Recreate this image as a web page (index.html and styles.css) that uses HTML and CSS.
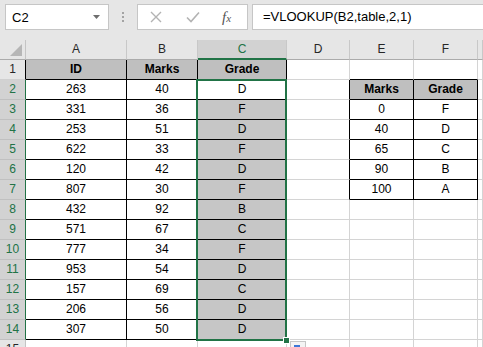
FILE: index.html
```html
<!DOCTYPE html>
<html lang="en">
<head>
    <meta charset="UTF-8">
    <title>VLOOKUP Grades</title>
    <link rel="stylesheet" href="styles.css">
</head>
<body>
    <div class="toolbar">
        <div class="namebox">
            <span>C2</span>
            <svg class="caret" width="7" height="4" viewBox="0 0 7 4"><path d="M0 0h7L3.5 4z" fill="#6e6e6e"/></svg>
        </div>
        <div class="grip"><i></i><i></i><i></i></div>
        <div class="fxbox">
            <svg width="12" height="12" viewBox="0 0 12 12"><path d="M1 1L11 11M11 1L1 11" stroke="#b3b3b3" stroke-width="1.4"/></svg>
            <svg width="14" height="12" viewBox="0 0 14 12"><path d="M1 6.5L5 10.5L13 1.5" stroke="#b3b3b3" stroke-width="1.6" fill="none"/></svg>
            <span class="fx">f<small>x</small></span>
        </div>
        <div class="formula">=VLOOKUP(B2,table,2,1)</div>
    </div>

    <div class="sheet">
        <!-- column headers -->
        <div class="c corner"><svg width="12" height="12" viewBox="0 0 12 12"><path d="M12 0V12H0z" fill="#b6b6b6"/></svg></div>
        <div class="c ch">A</div>
        <div class="c ch">B</div>
        <div class="c ch on">C</div>
        <div class="c ch">D</div>
        <div class="c ch">E</div>
        <div class="c ch">F</div>
        <div class="c ch"></div>

        <div class="c rh edge-r">1</div>
        <div class="c t hd">ID</div>
        <div class="c t hd">Marks</div>
        <div class="c t hd">Grade</div>
        <div class="c"></div>
        <div class="c edge-b"></div>
        <div class="c edge-b"></div>
        <div class="c"></div>

        <div class="c rh on">2</div>
        <div class="c t">263</div>
        <div class="c t">40</div>
        <div class="c t">D</div>
        <div class="c edge-r"></div>
        <div class="c t hd">Marks</div>
        <div class="c t hd">Grade</div>
        <div class="c"></div>

        <div class="c rh on">3</div>
        <div class="c t">331</div>
        <div class="c t">36</div>
        <div class="c t sel">F</div>
        <div class="c edge-r"></div>
        <div class="c t">0</div>
        <div class="c t">F</div>
        <div class="c"></div>

        <div class="c rh on">4</div>
        <div class="c t">253</div>
        <div class="c t">51</div>
        <div class="c t sel">D</div>
        <div class="c edge-r"></div>
        <div class="c t">40</div>
        <div class="c t">D</div>
        <div class="c"></div>

        <div class="c rh on">5</div>
        <div class="c t">622</div>
        <div class="c t">33</div>
        <div class="c t sel">F</div>
        <div class="c edge-r"></div>
        <div class="c t">65</div>
        <div class="c t">C</div>
        <div class="c"></div>

        <div class="c rh on">6</div>
        <div class="c t">120</div>
        <div class="c t">42</div>
        <div class="c t sel">D</div>
        <div class="c edge-r"></div>
        <div class="c t">90</div>
        <div class="c t">B</div>
        <div class="c"></div>

        <div class="c rh on">7</div>
        <div class="c t">807</div>
        <div class="c t">30</div>
        <div class="c t sel">F</div>
        <div class="c edge-r"></div>
        <div class="c t">100</div>
        <div class="c t">A</div>
        <div class="c"></div>

        <div class="c rh on">8</div>
        <div class="c t">432</div>
        <div class="c t">92</div>
        <div class="c t sel">B</div>
        <div class="c"></div>
        <div class="c"></div>
        <div class="c"></div>
        <div class="c"></div>

        <div class="c rh on">9</div>
        <div class="c t">571</div>
        <div class="c t">67</div>
        <div class="c t sel">C</div>
        <div class="c"></div>
        <div class="c"></div>
        <div class="c"></div>
        <div class="c"></div>

        <div class="c rh on">10</div>
        <div class="c t">777</div>
        <div class="c t">34</div>
        <div class="c t sel">F</div>
        <div class="c"></div>
        <div class="c"></div>
        <div class="c"></div>
        <div class="c"></div>

        <div class="c rh on">11</div>
        <div class="c t">953</div>
        <div class="c t">54</div>
        <div class="c t sel">D</div>
        <div class="c"></div>
        <div class="c"></div>
        <div class="c"></div>
        <div class="c"></div>

        <div class="c rh on">12</div>
        <div class="c t">157</div>
        <div class="c t">69</div>
        <div class="c t sel">C</div>
        <div class="c"></div>
        <div class="c"></div>
        <div class="c"></div>
        <div class="c"></div>

        <div class="c rh on">13</div>
        <div class="c t">206</div>
        <div class="c t">56</div>
        <div class="c t sel">D</div>
        <div class="c"></div>
        <div class="c"></div>
        <div class="c"></div>
        <div class="c"></div>

        <div class="c rh on">14</div>
        <div class="c t">307</div>
        <div class="c t">50</div>
        <div class="c t sel">D</div>
        <div class="c"></div>
        <div class="c"></div>
        <div class="c"></div>
        <div class="c"></div>

        <div class="c rh">15</div>
        <div class="c"></div>
        <div class="c"></div>
        <div class="c"></div>
        <div class="c"></div>
        <div class="c"></div>
        <div class="c"></div>
        <div class="c"></div>
    </div>

    <!-- selection C2:C14 -->
    <div class="selection"><span class="handle"></span></div>
    <div class="quick"><span></span></div>
</body>
</html>
```

FILE: styles.css
```css
body {
    margin: 0;
    background: #ffffff;
    font-family: "Liberation Sans", Arial, sans-serif;
    font-size: 12px;
    color: #000;
    overflow: hidden;
    height: 347px;
    position: relative;
}
.toolbar {
    height: 40px;
    background: #e6e6e6;
    display: flex;
    align-items: flex-start;
    padding-top: 4px;
    box-sizing: border-box;
}
.namebox {
    width: 104px;
    height: 26px;
    margin-left: 5px;
    box-sizing: border-box;
    border: 1px solid #c6c6c6;
    background: #fff;
    display: flex;
    align-items: center;
    justify-content: space-between;
    padding: 0 8px 0 6px;
    font-size: 13px;
}
.grip {
    width: 28px;
    height: 26px;
    display: flex;
    flex-direction: column;
    align-items: center;
    justify-content: center;
    gap: 2px;
}
.grip i {
    width: 2px;
    height: 2px;
    background: #a3a3a3;
}
.fxbox {
    width: 111px;
    height: 26px;
    box-sizing: border-box;
    border: 1px solid #c6c6c6;
    background: #fff;
    display: flex;
    align-items: center;
    padding-left: 12px;
    gap: 24px;
}
.fx {
    font-family: "Liberation Serif", serif;
    font-style: italic;
    font-size: 15px;
    color: #555;
    margin-left: -2px;
}
.fx small {
    font-size: 11px;
}
.formula {
    flex: 1;
    height: 26px;
    margin-left: 4px;
    margin-right: -2px;
    box-sizing: border-box;
    border: 1px solid #c6c6c6;
    background: #fff;
    font-size: 13px;
    line-height: 24px;
    padding-left: 10px;
}
.sheet {
    display: grid;
    grid-template-columns: 26px 101px 71px 89px 63px 64px 64px 1fr;
    grid-auto-rows: 20px;
}
.c {
    box-sizing: border-box;
    border-right: 1px solid #d4d4d4;
    border-bottom: 1px solid #d4d4d4;
    text-align: center;
    line-height: 19px;
    overflow: hidden;
    white-space: nowrap;
}
.corner {
    background: #e6e6e6;
    border-right: 1px solid #c4c4c4;
    border-bottom: 1px solid #ababab;
    display: flex;
    align-items: flex-end;
    justify-content: flex-end;
    padding: 0 3px 3px 0;
}
.ch {
    background: #e6e6e6;
    color: #262626;
    border-right: 1px solid #c8c8c8;
    border-bottom: 1px solid #ababab;
    font-size: 12px;
}
.ch.on {
    background: #d2d2d2;
    color: #217346;
    border-bottom: 2px solid #217346;
}
.rh {
    background: #e6e6e6;
    color: #262626;
    border-right: 1px solid #c4c4c4;
    border-bottom: 1px solid #d0d0d0;
}
.rh.on {
    background: #d2d2d2;
    color: #217346;
    border-right: 1px solid #217346;
    border-bottom: 1px solid #c0c0c0;
}
.t {
    border-right: 1px solid #000;
    border-bottom: 1px solid #000;
}
.hd {
    background: #bfbfbf;
    font-weight: bold;
}
.sel {
    background: #c6c6c6;
}
.edge-r {
    border-right: 1px solid #000;
}
.edge-b {
    border-bottom: 1px solid #000;
}
.selection {
    position: absolute;
    left: 196px;
    top: 79px;
    width: 91px;
    height: 262px;
    box-sizing: border-box;
    border: 2px solid #217346;
    pointer-events: none;
}
.handle {
    position: absolute;
    right: -5px;
    bottom: -5px;
    width: 5px;
    height: 5px;
    background: #217346;
    border: 1px solid #fff;
}
.quick {
    position: absolute;
    left: 290px;
    top: 341px;
    width: 16px;
    height: 14px;
    box-sizing: border-box;
    border: 1px solid #c6c6c6;
    background: #f4f4f4;
}
.quick span {
    position: absolute;
    left: 3px;
    top: 3px;
    width: 6px;
    height: 6px;
    background: #3c78d8;
}
```
